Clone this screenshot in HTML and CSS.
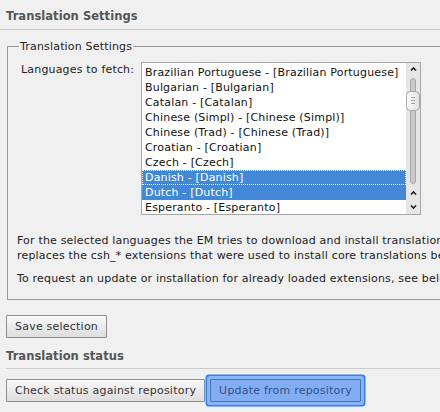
FILE: index.html
```html
<!DOCTYPE html>
<html>
<head>
<meta charset="utf-8">
<title>Translation Settings</title>
<link rel="stylesheet" href="styles.css">
</head>
<body>
<div class="page">
  <h2 class="section-title first">Translation Settings</h2>
  <div class="content">
    <fieldset class="settings">
      <legend>Translation Settings</legend>
      <div class="form-row">
        <label class="form-label">Languages to fetch:</label>
        <div class="listbox">
          <div class="listbox-items">
            <div class="rows">
              <div class="opt">Bosnian - [Bosnian]</div>
              <div class="opt">Brazilian Portuguese - [Brazilian Portuguese]</div>
              <div class="opt">Bulgarian - [Bulgarian]</div>
              <div class="opt">Catalan - [Catalan]</div>
              <div class="opt">Chinese (Simpl) - [Chinese (Simpl)]</div>
              <div class="opt">Chinese (Trad) - [Chinese (Trad)]</div>
              <div class="opt">Croatian - [Croatian]</div>
              <div class="opt">Czech - [Czech]</div>
              <div class="opt selected focused">Danish - [Danish]</div>
              <div class="opt selected">Dutch - [Dutch]</div>
              <div class="opt">Esperanto - [Esperanto]</div>
              <div class="opt">Estonian - [Estonian]</div>
            </div>
          </div>
          <div class="scrollbar">
            <svg width="14" height="151" viewBox="0 0 14 151">
              <defs>
                <linearGradient id="thumbg" x1="0" y1="0" x2="1" y2="0">
                  <stop offset="0" stop-color="#fdfdfd"/>
                  <stop offset="1" stop-color="#dedede"/>
                </linearGradient>
              </defs>
              <polyline points="5,7.5 7.5,5 10,7.5" fill="none" stroke="#1e1e1e" stroke-width="1.6"/>
              <rect x="4.5" y="15.5" width="5" height="105" rx="2.5" fill="#c9c9c9" stroke="#a9a9a9"/>
              <rect x="0.5" y="28.5" width="13" height="19" rx="4" fill="url(#thumbg)" stroke="#a6a6a6"/>
              <line x1="5" y1="34.5" x2="9" y2="34.5" stroke="#a4a4a4"/>
              <line x1="5" y1="37.5" x2="9" y2="37.5" stroke="#a4a4a4"/>
              <line x1="5" y1="40.5" x2="9" y2="40.5" stroke="#a4a4a4"/>
              <polyline points="5,131.5 7.5,129 10,131.5" fill="none" stroke="#1e1e1e" stroke-width="1.6"/>
              <polyline points="5,142.5 7.5,145 10,142.5" fill="none" stroke="#1e1e1e" stroke-width="1.6"/>
            </svg>
          </div>
        </div>
      </div>
      <p class="note">For the selected languages the EM tries to download and install translation files if available, for each installed extension. This<br>replaces the csh_* extensions that were used to install core translations before.</p>
      <p class="note second">To request an update or installation for already loaded extensions, see below.</p>
    </fieldset>
    <div class="actions save-row">
      <button class="btn">Save selection</button>
    </div>
    <h3 class="section-title sub">Translation status</h3>
    <div class="actions status-row">
      <button class="btn">Check status against repository</button>
      <button class="btn btn-focus">Update from repository</button>
    </div>
  </div>
</div>
</body>
</html>
```

FILE: styles.css
```css
html, body {
  margin: 0;
  padding: 0;
}

body {
  background: #f0f0f0;
  font-family: "DejaVu Sans", Verdana, sans-serif;
  font-size: 11px;
  letter-spacing: 0.18px;
  color: #222;
  width: 440px;
  height: 412px;
  overflow: hidden;
}

.page {
  width: 760px;
}

.section-title {
  margin: 0;
  font-size: 11.5px;
  font-weight: bold;
  letter-spacing: 0.05px;
  color: #555;
  line-height: 15px;
  border-bottom: 1px solid #cbcbcb;
}

.section-title.first {
  padding: 9px 0 5px 6px;
}

.section-title.sub {
  margin-top: 11px;
  padding: 0 0 4px 0;
}

.content {
  padding-left: 6px;
}

fieldset.settings {
  margin: 9px 0 0 1px;
  padding: 0 9px 13px 9px;
  border: 1px solid #9a9a9a;
  min-width: 0;
}

fieldset.settings legend {
  margin-left: 2px;
  padding: 0 1px;
  line-height: 15px;
  color: #222;
}

.form-row {
  margin-top: 8px;
  display: grid;
  grid-template-columns: 124px 280px;
  align-items: start;
}

.form-label {
  padding-left: 4px;
  line-height: 15px;
  color: #222;
}

.listbox {
  box-sizing: border-box;
  width: 280px;
  height: 153px;
  border: 1px solid #a7a7a7;
  background: #fff;
  display: flex;
}

.listbox-items {
  flex: 1;
  overflow: hidden;
}

.rows {
  margin-top: -13px;
}

.opt {
  height: 15px;
  line-height: 15px;
  padding-left: 3px;
  color: #111;
  white-space: nowrap;
}

.opt.selected {
  background: #4388d6;
  color: #fff;
}

.opt.focused {
  outline: 1px dotted #fff;
  outline-offset: -1px;
}

.scrollbar {
  width: 14px;
  background: #e6e6e6;
  display: flex;
}

.note {
  margin: 18px 0 0;
  line-height: 15px;
  white-space: nowrap;
  color: #222;
}

.note.second {
  margin-top: 8px;
}

.actions {
  display: flex;
  gap: 5px;
}

.save-row {
  margin-top: 15px;
}

.status-row {
  margin-top: 10px;
}

.btn {
  font-family: "DejaVu Sans", Verdana, sans-serif;
  font-size: 11px;
  letter-spacing: 0.22px;
  line-height: 15px;
  padding: 3px 8px;
  border: 1px solid #8e8e8e;
  border-radius: 1px;
  color: #333;
  background: linear-gradient(#f9f9f9, #dddddd);
  margin: 0;
}

.btn-focus {
  border-color: #4d72b2;
  background: #83adf3;
  color: #2f538b;
  box-shadow: 0 0 0 3px #86b6fb, 0 0 0 4.5px #2f7ff6;
}
```
